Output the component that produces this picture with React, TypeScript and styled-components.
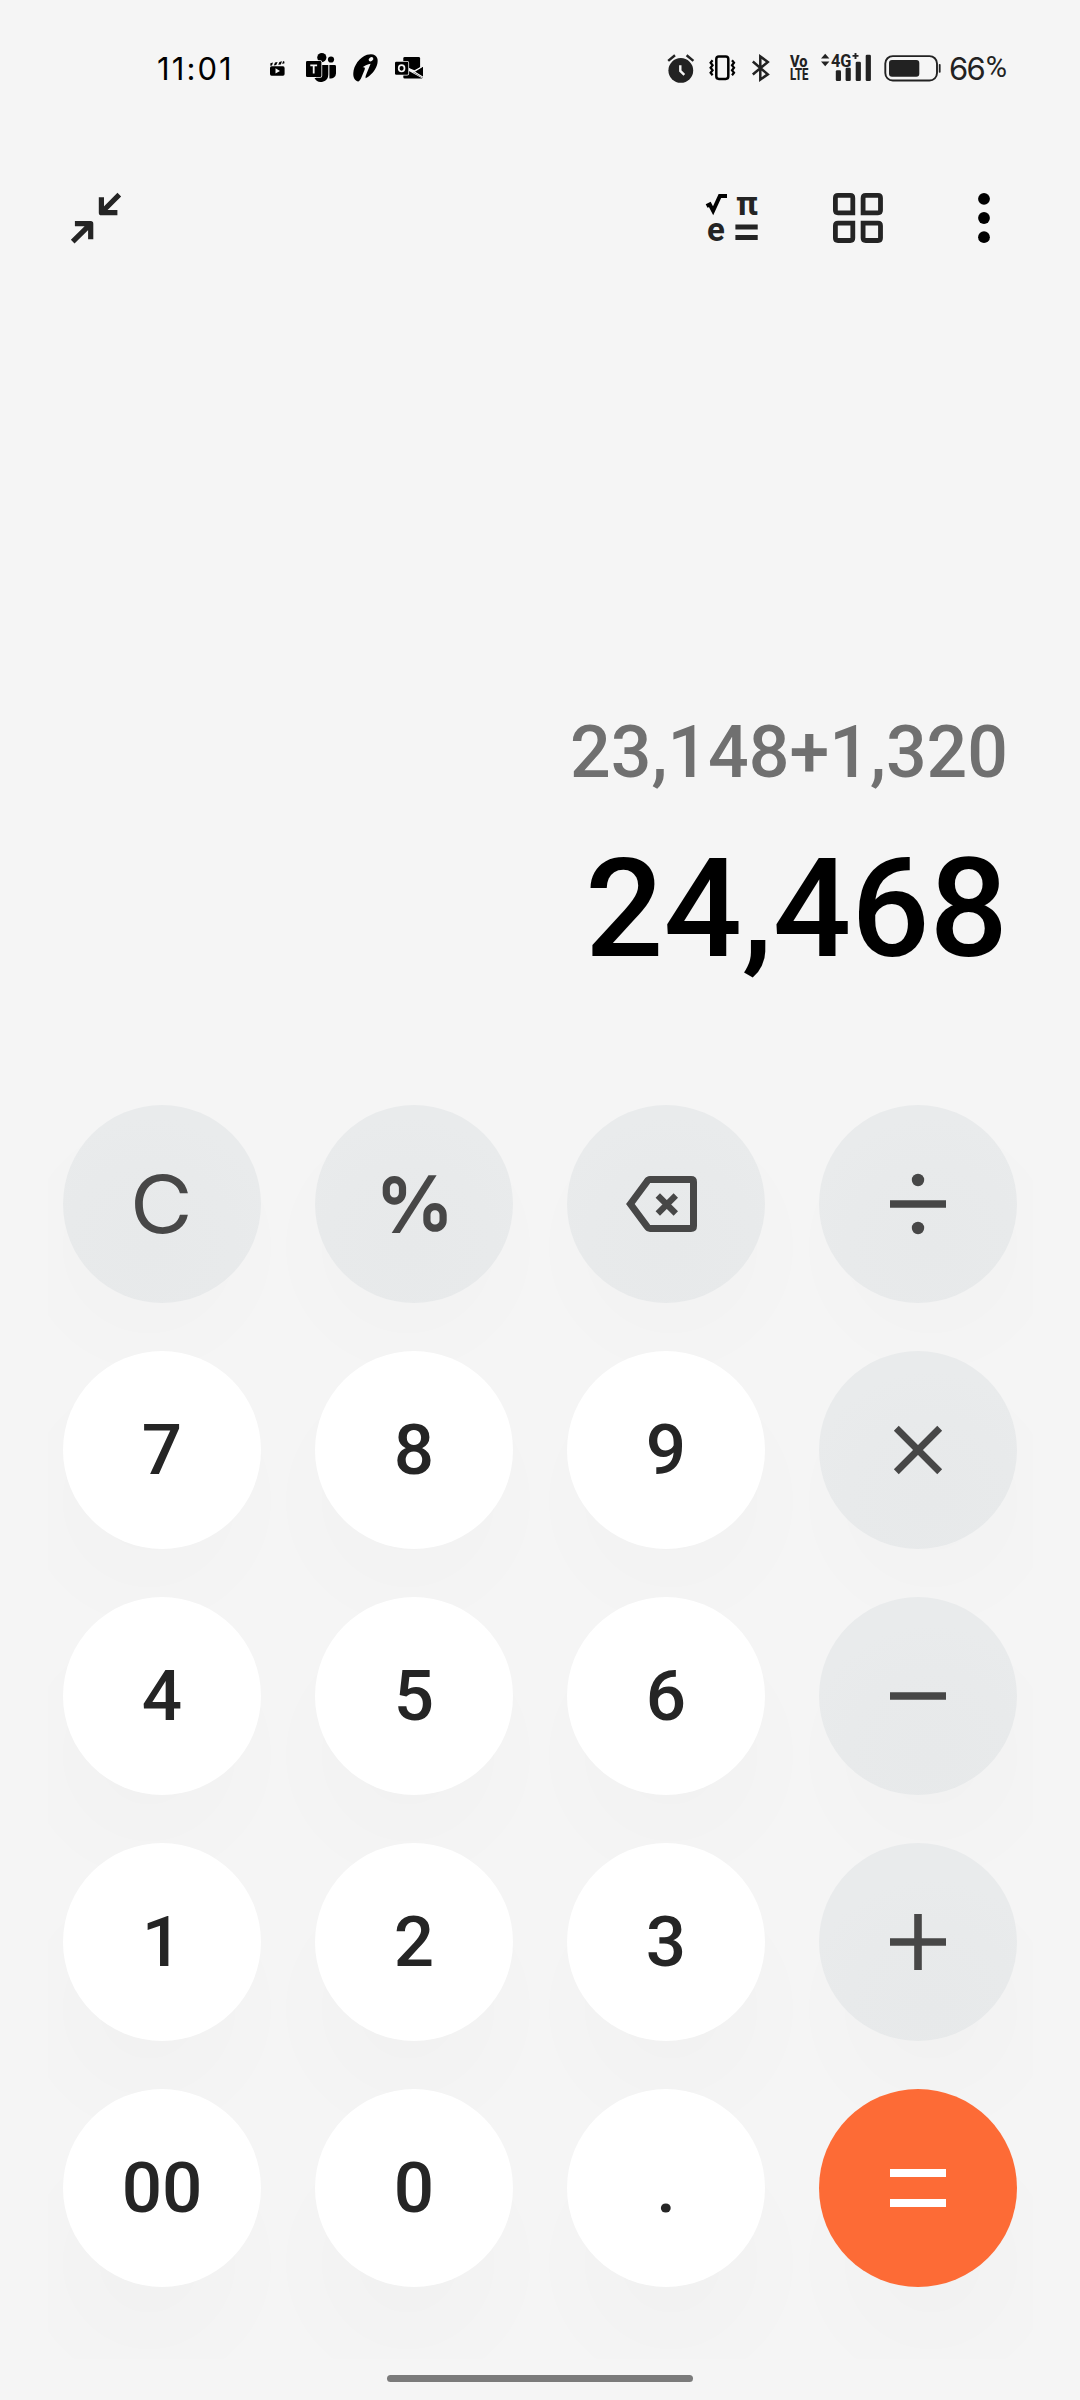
import React from "react";
import styled, { createGlobalStyle } from "styled-components";

const GlobalStyle = createGlobalStyle`
  * { box-sizing: border-box; }
  body { margin: 0; background: #f5f5f5; }
`;

const Screen = styled.main`
  width: 1080px;
  height: 2400px;
  display: flex;
  flex-direction: column;
  overflow: hidden;
  background: #f5f5f5;
  color: #000;
  font-family: Roboto, "Noto Sans", sans-serif;
`;

const StatusBar = styled.header`
  height: 136px;
  padding: 0 74px 0 157px;
  display: flex;
  align-items: center;
  justify-content: space-between;
`;

const StatusGroup = styled.div`
  display: flex;
  align-items: center;
`;

const Clock = styled.time`
  width: 113px;
  font-family: Inter, sans-serif;
  font-size: 31px;
  line-height: 36px;
  letter-spacing: 2.1px;
  padding-top: 2px;
`;

const Glyph = styled.svg<{ $gap?: number }>`
  display: block;
  flex: none;
  overflow: visible;
  margin-left: ${(p) => p.$gap ?? 0}px;
`;

const BatteryLevel = styled.span`
  width: 57px;
  margin-left: 8px;
  display: flex;
  align-items: flex-start;
  padding-top: 2px;
  color: #222;
  font-family: Inter, sans-serif;
  font-size: 31px;
  line-height: 36px;
  letter-spacing: -1.8px;
  white-space: nowrap;
`;

const PercentSign = styled.span`
  margin-left: 2px;
  font-family: Roboto, sans-serif;
  font-size: 29px;
  line-height: 33px;
  letter-spacing: 0;
`;

const Toolbar = styled.nav`
  height: 164px;
  padding: 0 90px 0 71px;
  display: flex;
  align-items: center;
  justify-content: space-between;
`;

const ToolActions = styled.div`
  display: flex;
  align-items: center;
`;

const Display = styled.section`
  height: 790px;
  padding: 0 72px 100px 0;
  display: flex;
  flex-direction: column;
  align-items: flex-end;
  justify-content: flex-end;
  font-weight: 500;
`;

const Expression = styled.div`
  font-size: 71.6px;
  line-height: 84px;
  color: #707070;
`;

const Result = styled.output`
  margin-top: 33px;
  font-size: 138px;
  line-height: 162px;
`;

const Keypad = styled.section`
  width: 985px;
  height: 1269px;
  margin-left: 48px;
  padding: 15px 15px 0;
  overflow: hidden;
  display: grid;
  grid-template-columns: repeat(4, 198px);
  grid-auto-rows: 198px;
  column-gap: 54px;
  row-gap: 48px;
`;

type Tone = "number" | "operator" | "primary";

const keyFill: Record<Tone, string> = {
  number: "#ffffff",
  operator: "#e9ebec",
  primary: "#fd6b36",
};

const keyInk: Record<Tone, string> = {
  number: "#252525",
  operator: "#474747",
  primary: "#ffffff",
};

const Key = styled.button<{ $tone: Tone; $dx: number; $dy: number }>`
  width: 198px;
  height: 198px;
  padding: 0 0 1px;
  border: 0;
  border-radius: 50%;
  display: flex;
  align-items: center;
  justify-content: center;
  background: ${(p) =>
    p.$tone === "operator"
      ? `radial-gradient(circle at ${99 + p.$dx}px ${99 + p.$dy}px, #e7e9ea 0, #e8eaeb 84px, #e9ebec 130px)`
      : keyFill[p.$tone]};
  color: ${(p) => keyInk[p.$tone]};
  box-shadow: ${(p) => `${p.$dx}px ${p.$dy}px 100px rgba(0, 0, 0, 0.014)`};
  font-family: Roboto, sans-serif;
  font-size: 71px;
  font-weight: 500;
  line-height: 82px;
`;

const ClearLabel = styled.span`
  font-family: Inter, sans-serif;
  font-size: 80px;
  font-weight: 400;
  line-height: 96px;
  transform: translateX(-1px) scaleX(1.07);
`;

const KeyIcon = styled.svg`
  display: block;
  width: 80px;
  height: 80px;
  margin-top: 1px;
  fill: none;
  stroke: currentColor;
`;

const HomeArea = styled.footer`
  flex: 1;
  display: flex;
  justify-content: center;
  align-items: flex-end;
  padding-bottom: 18px;
`;

const HomeBar = styled.div`
  width: 306px;
  height: 7px;
  border-radius: 4px;
  background: #7b7b7b;
`;

const ClipIcon = () => (
  <Glyph width="15" height="15" viewBox="0 0 15 15">
    <path d="M.4 2.3 3 1.5 2 4.4.3 4.8zM5 1.5 7.6.9 6.3 4 3.8 4.4zM9.4.9 12 .3 10.8 3.4 8.2 3.8zM13 .2l1.2 0 .3 2-2.3.9z" />
    <rect y="5.3" width="14.6" height="9.4" rx="1.6" />
    <path d="M5.5 7.2v5.4L10 9.9z" fill="#f5f5f5" />
  </Glyph>
);

const TeamsIcon = () => (
  <Glyph $gap={21} width="30" height="30" viewBox="0 0 30 30">
    <circle cx="15.8" cy="4.6" r="4.6" />
    <circle cx="25" cy="6.5" r="3.1" />
    <path d="M10 12h12.3v9.5a7.3 7.3 0 0 1-13.8 3.4H10zM23.4 12h5.2a1.4 1.4 0 0 1 1.4 1.4v7a5.3 5.3 0 0 1-6.6 5z" />
    <rect x="-.8" y="7.2" width="17" height="17.6" rx="2" fill="#f5f5f5" />
    <rect y="8" width="15.4" height="16" rx="1.3" />
    <path d="M4.3 12.3h6.8M7.7 12.3v8.2" stroke="#f5f5f5" strokeWidth="1.8" />
  </Glyph>
);

const LeafIcon = () => (
  <Glyph $gap={17} width="26" height="28" viewBox="0 0 26 28">
    <path d="M5.4 27.5C1.8 26.9 0 23.5.3 19 .8 11.6 6.4 3.4 14 .8c5-1.6 9.6-.3 10.5 4.2.9 5.6-2.2 11.5-6.7 15.5-1.800 1.600-3.300 2.900-5.100 3.700-.5-1.300.2-2.900 1-4.900l3.900-9.600c-2.900.5-5.500 1.500-8 3.600 2.300 0 2.700.6 2 2.400L8.400 23.400c-.7 1.700-1.500 3.200-3 4.100z" />
    <ellipse cx="18" cy="5.200" rx="2.500" ry="1.900" transform="rotate(-35 18 5.200)" fill="#f5f5f5" />
  </Glyph>
);

const OutlookIcon = () => (
  <Glyph $gap={16} width="28" height="23" viewBox="0 0 28 23">
    <path d="M8.3 1.400A1.400 1.400 0 0 1 9.700 0h14a1.400 1.400 0 0 1 1.400 1.400v9L19.500 13.200 8.300 9z" />
    <path d="M28 9.500v11.500L18 15.200zM8.300 18.500 13 13.500 27.500 21.600H9.700a1.400 1.400 0 0 1-1.400-1.400z" />
    <path d="M13 11 28 20.300M18 15.200 28 9" fill="none" stroke="#f5f5f5" strokeWidth="1.300" />
    <rect x="-.8" y="4" width="14.900" height="14.600" rx="2" fill="#f5f5f5" />
    <rect y="4.800" width="13.300" height="13" rx="1.300" />
    <ellipse cx="6.600" cy="11.300" rx="2.900" ry="3.200" fill="none" stroke="#f5f5f5" strokeWidth="1.700" />
  </Glyph>
);

const AlarmIcon = () => (
  <Glyph width="27" height="29" viewBox="0 0 27 29">
    <circle cx="12.800" cy="16.400" r="12.400" fill="#222" />
    <path d="M.2 6.900 7 1.300M18.600 1.300 25.400 6.900" stroke="#222" strokeWidth="2.500" fill="none" />
    <path d="M12.300 11.300v5.600l4 3.900" stroke="#f5f5f5" strokeWidth="2.400" fill="none" />
  </Glyph>
);

const VibrateIcon = () => (
  <Glyph $gap={13.5} width="27" height="26" viewBox="0 0 27 26" fill="none" stroke="#000" strokeWidth="2.500">
    <rect x="7.300" y="1.500" width="12" height="22.400" rx="2.600" />
    <path d="M3.600 5.200 1.600 7.700 3.600 10.200 1.600 12.700 3.600 15.200 1.600 17.700 3.600 20.200M23 5.200 25 7.700 23 10.200 25 12.700 23 15.200 25 17.700 23 20.200" strokeWidth="2.200" />
  </Glyph>
);

const BluetoothIcon = () => (
  <Glyph $gap={16} width="18" height="28" viewBox="0 0 18 28" fill="none" stroke="#222" strokeWidth="2.500">
    <path d="M.8 7.500 15.800 20.300 8.300 25.600V2.400L15.800 8 .8 20.500" />
  </Glyph>
);

const VolteIcon = () => (
  <Glyph $gap={20} width="19" height="26" viewBox="0 0 19 26" fill="#222" fontFamily="Roboto" fontWeight="800">
    <text fontSize="15.800">
      <tspan x="0" y="12.300" textLength="17.500" lengthAdjust="spacingAndGlyphs">Vo</tspan>
      <tspan x="0" y="25.300" textLength="18.500" lengthAdjust="spacingAndGlyphs">LTE</tspan>
    </text>
  </Glyph>
);

const SignalIcon = () => (
  <Glyph $gap={12.5} width="51" height="30" viewBox="0 0 51 30" fill="#222">
    <path d="M4.200.8 8.400 5.500H0zM4.200 13.300 8.400 8.600H0z" />
    <text x="10" y="13.600" fontSize="17.500" fontFamily="Roboto" fontWeight="700" textLength="20.500" lengthAdjust="spacingAndGlyphs">4G</text>
    <path d="M31.500 2.900h6M34.500 0v6" stroke="#222" strokeWidth="1.900" />
    <rect x="14.800" y="17.300" width="5.200" height="10.700" rx="1.300" />
    <rect x="24.600" y="14.800" width="5.200" height="13.200" rx="1.300" />
    <rect x="34.700" y="8.700" width="5.200" height="19.300" rx="1.300" />
    <rect x="44.700" y="1.800" width="5.200" height="26.200" rx="1.300" />
  </Glyph>
);

const BatteryIcon = () => (
  <Glyph $gap={12} width="57" height="27" viewBox="0 0 57 27">
    <rect x="1.300" y="1.100" width="51.700" height="24.400" rx="7.500" fill="none" stroke="#222" strokeWidth="1.900" />
    <rect x="5" y="5" width="30.300" height="16.700" rx="3" fill="#222" />
    <rect x="54.800" y="9" width="1.800" height="8.800" rx=".8" fill="#222" />
  </Glyph>
);

const CollapseIcon = () => (
  <Glyph width="50" height="51" viewBox="0 0 50 51" fill="none" stroke="#242424" strokeWidth="5.200" strokeLinejoin="round">
    <path d="M48.300 1.700 30.500 19.500M30.400 4.300v15.400h16M1.700 48.600 19.500 31.100M3.900 30.700h15.800v15.600" />
  </Glyph>
);

const ScientificIcon = () => (
  <Glyph width="53" height="50" viewBox="0 0 53 50">
    <path d="M.6 13 3.800 11.400 7.100 17.800 13.900 3H21" fill="none" stroke="#000" strokeWidth="4" />
    <text x="30" y="21.700" fontSize="34" fontFamily="Roboto" fontWeight="700" fill="#242424" textLength="22" lengthAdjust="spacingAndGlyphs">π</text>
    <text x="1" y="48.400" fontSize="33" fontFamily="Roboto" fontWeight="700" fill="#242424">e</text>
    <path d="M29.400 34h22.300M29.400 44.600h22.300" stroke="#242424" strokeWidth="5" />
  </Glyph>
);

const GridIcon = () => (
  <Glyph $gap={74} width="50" height="50" viewBox="0 0 50 50" fill="none" stroke="#242424" strokeWidth="4.800">
    <path d="M5 2.400H17.300Q19.800 2.400 19.800 5V19.800H5Q2.400 19.800 2.400 17.300V5Q2.400 2.400 5 2.400z" />
    <path d="M32.700 2.400H45Q47.500 2.400 47.500 5V17.300Q47.500 19.800 45 19.800H30.100V5Q30.100 2.400 32.700 2.400z" />
    <path d="M5 30.100H19.800V45Q19.800 47.500 17.300 47.500H5Q2.400 47.500 2.400 45V32.700Q2.400 30.100 5 30.100z" />
    <path d="M30.100 30.100H45Q47.500 30.100 47.500 32.700V45Q47.500 47.500 45 47.500H32.700Q30.100 47.500 30.100 45z" />
  </Glyph>
);

const MoreIcon = () => (
  <Glyph $gap={95} width="12" height="50" viewBox="0 0 12 50">
    <circle cx="6" cy="5.800" r="5.900" />
    <circle cx="6" cy="25" r="5.900" />
    <circle cx="6" cy="44.200" r="5.900" />
  </Glyph>
);

const PercentIcon = () => (
  <KeyIcon viewBox="-40 -40 80 80" strokeWidth="7.200">
    <rect x="-27.700" y="-24.400" width="16.200" height="21.500" rx="8" />
    <rect x="12.900" y="2.700" width="16.200" height="21.500" rx="8" />
    <path d="M14.500-28.700h8.100L-14.200 29h-8.100z" fill="currentColor" stroke="none" />
  </KeyIcon>
);

const BackspaceIcon = () => (
  <KeyIcon viewBox="-40 -40 80 80" strokeWidth="7" overflow="visible">
    <path d="M-35.600 0-19-22.500Q-17.800-24.400-16-24.400H25Q27.500-24.400 27.500-22V22Q27.500 24.400 25 24.400H-16Q-17.800 24.400-19 22.500z" />
    <path d="M-8.200-8.500 9.800 9.500M9.800-8.500-8.200 9.500" strokeWidth="6.200" />
  </KeyIcon>
);

const DivideIcon = () => (
  <KeyIcon viewBox="-40 -40 80 80" strokeWidth="7.600">
    <path d="M-28 0h56" />
    <circle cy="-24" r="6.200" fill="currentColor" stroke="none" />
    <circle cy="24" r="6.200" fill="currentColor" stroke="none" />
  </KeyIcon>
);

const TimesIcon = () => (
  <KeyIcon viewBox="-40 -40 80 80" strokeWidth="6.900">
    <path d="M-21.700-21.700 21.700 21.700M21.700-21.700-21.700 21.700" />
  </KeyIcon>
);

const MinusIcon = () => (
  <KeyIcon viewBox="-40 -40 80 80" strokeWidth="7.600">
    <path d="M-28 0h56" />
  </KeyIcon>
);

const PlusIcon = () => (
  <KeyIcon viewBox="-40 -40 80 80" strokeWidth="7.600">
    <path d="M-28 0h56M0-28v56" />
  </KeyIcon>
);

const EqualsIcon = () => (
  <KeyIcon viewBox="-40 -40 80 80" strokeWidth="7.800">
    <path d="M-28-15h56M-28 15h56" />
  </KeyIcon>
);

interface KeyDef {
  id: string;
  tone: Tone;
  face: React.ReactNode;
}

const digit = (id: string): KeyDef => ({ id, tone: "number", face: id });
const operator = (id: string, face: React.ReactNode): KeyDef => ({ id, tone: "operator", face });

const keys: KeyDef[] = [
  operator("clear", <ClearLabel>C</ClearLabel>),
  operator("percent", <PercentIcon />),
  operator("backspace", <BackspaceIcon />),
  operator("divide", <DivideIcon />),
  digit("7"), digit("8"), digit("9"),
  operator("multiply", <TimesIcon />),
  digit("4"), digit("5"), digit("6"),
  operator("subtract", <MinusIcon />),
  digit("1"), digit("2"), digit("3"),
  operator("add", <PlusIcon />),
  digit("00"), digit("0"), digit("."),
  { id: "equals", tone: "primary", face: <EqualsIcon /> },
];

const shadowX = [-13, -6, 5, 13];

export default function App() {
  return (
    <Screen>
      <GlobalStyle />
      <StatusBar>
        <StatusGroup>
          <Clock>11:01</Clock>
          <ClipIcon />
          <TeamsIcon />
          <LeafIcon />
          <OutlookIcon />
        </StatusGroup>
        <StatusGroup>
          <AlarmIcon />
          <VibrateIcon />
          <BluetoothIcon />
          <VolteIcon />
          <SignalIcon />
          <BatteryIcon />
          <BatteryLevel>66<PercentSign>%</PercentSign></BatteryLevel>
        </StatusGroup>
      </StatusBar>
      <Toolbar>
        <CollapseIcon />
        <ToolActions>
          <ScientificIcon />
          <GridIcon />
          <MoreIcon />
        </ToolActions>
      </Toolbar>
      <Display>
        <Expression>23,148+1,320</Expression>
        <Result>24,468</Result>
      </Display>
      <Keypad>
        {keys.map((key, i) => (
          <Key key={key.id} $tone={key.tone} $dx={shadowX[i % 4]} $dy={43 + 8 * Math.floor(i / 4)}>
            {key.face}
          </Key>
        ))}
      </Keypad>
      <HomeArea>
        <HomeBar />
      </HomeArea>
    </Screen>
  );
}
